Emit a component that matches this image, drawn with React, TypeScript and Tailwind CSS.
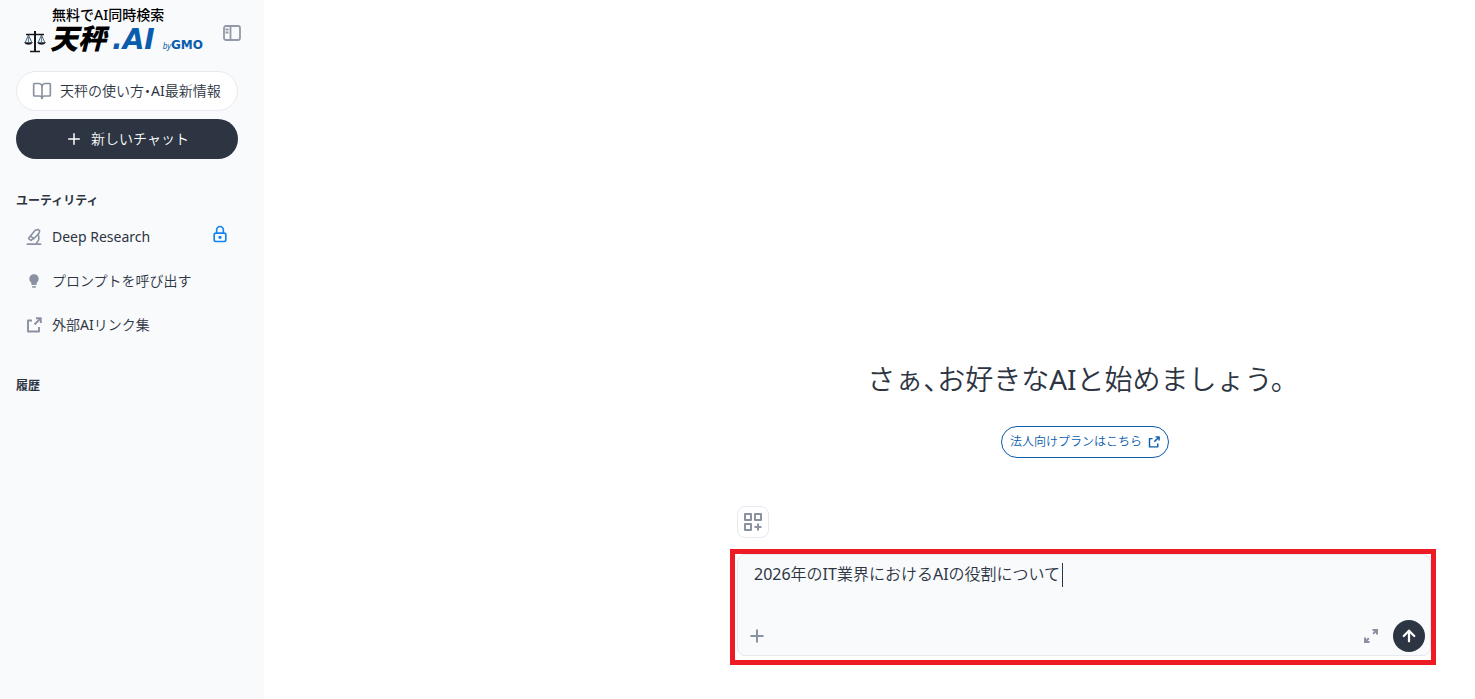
import type { ReactNode } from "react";
import { ArrowUp, BookOpen, Plus } from "lucide-react";
import { MdLightbulb } from "react-icons/md";
import { TbLock } from "react-icons/tb";

function ScalesIcon() {
  return (
    <svg width="22" height="22" viewBox="0 0 22 22" fill="none" stroke="#16181d" aria-hidden="true">
      <path d="M11 0v20" strokeWidth="2" />
      <path d="M2 3.5h18M6 20.5h10" strokeWidth="1.4" />
      <path d="M4.5 4L1.2 11.5M4.5 4l3.3 7.5M17.5 4l-3.3 7.5M17.5 4l3.3 7.5" strokeWidth="0.7" />
      <path d="M4.5 6v5M17.5 6v5" stroke="#3b8fd0" strokeWidth="1.2" />
      <path d="M.5 11.5h8c-.6 2.6-7.4 2.6-8 0zM13.5 11.5h8c-.6 2.6-7.4 2.6-8 0z" fill="#16181d" strokeWidth="0.4" />
    </svg>
  );
}

function PanelIcon() {
  return (
    <svg width="18" height="16" viewBox="0 0 18 16" fill="none" stroke="currentColor" strokeWidth="1.8" aria-hidden="true">
      <rect x="1" y="1" width="16" height="14" rx="2" />
      <path d="M7.5 1v14M2.5 4.5h3M2.5 7.5h3" />
    </svg>
  );
}

function MicroscopeIcon() {
  return (
    <svg width="16" height="18" viewBox="0 0 16 18" fill="none" stroke="currentColor" strokeWidth="1.6" strokeLinecap="round" strokeLinejoin="round" aria-hidden="true">
      <path d="M1.5 16.2h13" strokeWidth="1.8" />
      <path d="M9.2 2.3l2.8-.9 1.6 1.5-.6 2.4-5.2 5.4-3.3-2.7z" />
      <path d="M4.3 8.2l-1.8 2.3 2.5 2 2.2-1.8M12 6.5c1.6 3 .8 6.2-1.4 8.4" />
    </svg>
  );
}

function ExternalIcon({ size }: { size: number }) {
  return (
    <svg width={size} height={size} viewBox="0 0 16 16" fill="none" stroke="currentColor" strokeWidth="1.9" strokeLinejoin="round" aria-hidden="true">
      <path d="M6 3.5H2v11h11V10" />
      <path d="M10 1.2h4.8V6M14.8 1.2L8.5 7.5" />
    </svg>
  );
}

function GridPlusIcon() {
  return (
    <svg width="18" height="18" viewBox="0 0 18 18" fill="none" stroke="currentColor" strokeWidth="2" strokeLinejoin="round" aria-hidden="true">
      <path d="M1 1h6v6H1zM11 1h6v6h-6zM1 11h6v6H1zM14 10.5v7M10.5 14h7" />
    </svg>
  );
}

function ExpandIcon() {
  return (
    <svg width="14" height="14" viewBox="0 0 14 14" fill="none" stroke="currentColor" strokeWidth="2" aria-hidden="true">
      <path d="M8.5 1H13v4.5M13 1L9.2 4.8M5.5 13H1V8.5M1 13l3.8-3.8" />
    </svg>
  );
}

function NavItem({ icon, label, end }: { icon: ReactNode; label: string; end?: ReactNode }) {
  return (
    <li>
      <a href="#" className="flex h-11 items-center gap-2 pr-2.5 pl-2.5 text-sm">
        <span className="flex w-[18px] justify-start text-[#8a91a0]">{icon}</span>
        <span className="flex-1">{label}</span>
        {end}
      </a>
    </li>
  );
}

function SectionTitle({ children }: { children: ReactNode }) {
  return <h2 className="font-['Noto_Sans','Noto_Sans_CJK_JP',sans-serif] text-xs leading-5 font-bold">{children}</h2>;
}

function Sidebar() {
  return (
    <aside className="w-[264px] shrink-0 bg-[#f9fafc] pr-[26px] pl-4">
      <div className="flex h-[71px] items-start justify-between">
        <a href="#" className="block pt-[7px] pl-2 font-['Noto_Sans','Noto_Sans_CJK_JP',sans-serif] text-black">
          <span className="block pl-7 text-sm leading-4 font-medium">無料でAI同時検索</span>
          <span className="mt-[3px] flex h-8 items-center gap-1">
            <ScalesIcon />
            <span className="flex items-baseline leading-8 whitespace-nowrap italic">
              <span className="text-[28px] leading-8 font-black">天秤</span>
              <span className="pl-1.5 font-['DejaVu_Sans'] text-[28px] font-bold text-[#0a5cad]">.AI</span>
              <span className="pl-2 text-[8px] text-[#0a5cad]">by</span>
              <span className="font-['DejaVu_Sans'] text-[12px] font-bold text-[#0a5cad] not-italic">GMO</span>
            </span>
          </span>
        </a>
        <button type="button" aria-label="サイドバーを閉じる" className="-mr-[3px] mt-[25px] text-[#9299a9]">
          <PanelIcon />
        </button>
      </div>
      <a href="#" className="flex h-10 items-center gap-2 rounded-full border border-[#e6eaf0] bg-white pl-[15px] text-sm whitespace-nowrap">
        <BookOpen size={20} className="text-[#8a91a0]" />
        <span>
          天秤の使い方<span className="[font-feature-settings:'halt']">・</span>AI最新情報
        </span>
      </a>
      <button type="button" className="mt-2 mb-8 flex h-10 w-full items-center justify-center gap-2 rounded-full bg-[#2d3442] text-sm text-white">
        <Plus size={18} />
        新しいチャット
      </button>
      <SectionTitle>ユーティリティ</SectionTitle>
      <ul className="mt-1 mb-[29px]">
        <NavItem icon={<MicroscopeIcon />} label="Deep Research" end={<TbLock size={20} className="-mr-0.5 mb-1.5 text-[#1683f0]" />} />
        <NavItem icon={<MdLightbulb size={16} />} label="プロンプトを呼び出す" />
        <NavItem icon={<ExternalIcon size={16} />} label="外部AIリンク集" />
      </ul>
      <SectionTitle>履歴</SectionTitle>
    </aside>
  );
}

export default function App() {
  return (
    <div className="flex min-h-screen bg-white font-['Noto_Sans','Noto_Sans_CJK_JP_DemiLight','Noto_Sans_CJK_JP',sans-serif] text-[#2d3442]">
      <Sidebar />
      <main className="flex flex-1 flex-col items-end justify-end pr-[39px] pb-[34px]">
        <div className="flex w-full max-w-[706px] flex-col">
          <h1 className="text-center text-[28px] leading-10">
            さぁ<span className="[font-feature-settings:'halt']">、</span>お好きなAIと始めましょう。
          </h1>
          <a href="#" className="mt-[27px] ml-1 flex h-8 items-center gap-1.5 self-center rounded-full border border-[#0a5cad] px-2 text-xs text-[#0a5cad]">
            法人向けプランはこちら
            <ExternalIcon size={12} />
          </a>
          <button type="button" aria-label="AIを追加" className="mt-12 ml-[7px] flex size-8 items-center justify-center rounded-lg border border-[#e6e9f2] text-[#8a91a0]">
            <GridPlusIcon />
          </button>
          <div className="mt-[11px] border-[5px] border-[#ed1c24] pb-1 pl-0.5">
            <form className="rounded-lg border border-[#e4e8ef] bg-[#f9fafc]">
              <div className="relative">
                <textarea
                  aria-label="メッセージ"
                  rows={2}
                  defaultValue="2026年のIT業界におけるAIの役割について"
                  className="block h-[61px] w-full resize-none px-4 pt-[7px] text-base leading-6 caret-transparent outline-none"
                />
                <span aria-hidden="true" className="absolute top-2 left-[324px] h-6 w-px bg-[#2d3442]" />
              </div>
              <div className="flex h-[39px] items-start justify-between pr-[5px] pl-[9px]">
                <button type="button" aria-label="ファイルを追加" className="mt-2.5 text-[#8a91a0]">
                  <Plus size={20} strokeWidth={2.4} />
                </button>
                <div className="flex items-center gap-[15px] pt-1">
                  <button type="button" aria-label="拡大" className="text-[#8a91a0]">
                    <ExpandIcon />
                  </button>
                  <button type="submit" aria-label="送信" className="flex size-8 items-center justify-center rounded-full bg-[#2d3442] text-white">
                    <ArrowUp size={18} strokeWidth={3} />
                  </button>
                </div>
              </div>
            </form>
          </div>
        </div>
      </main>
    </div>
  );
}
